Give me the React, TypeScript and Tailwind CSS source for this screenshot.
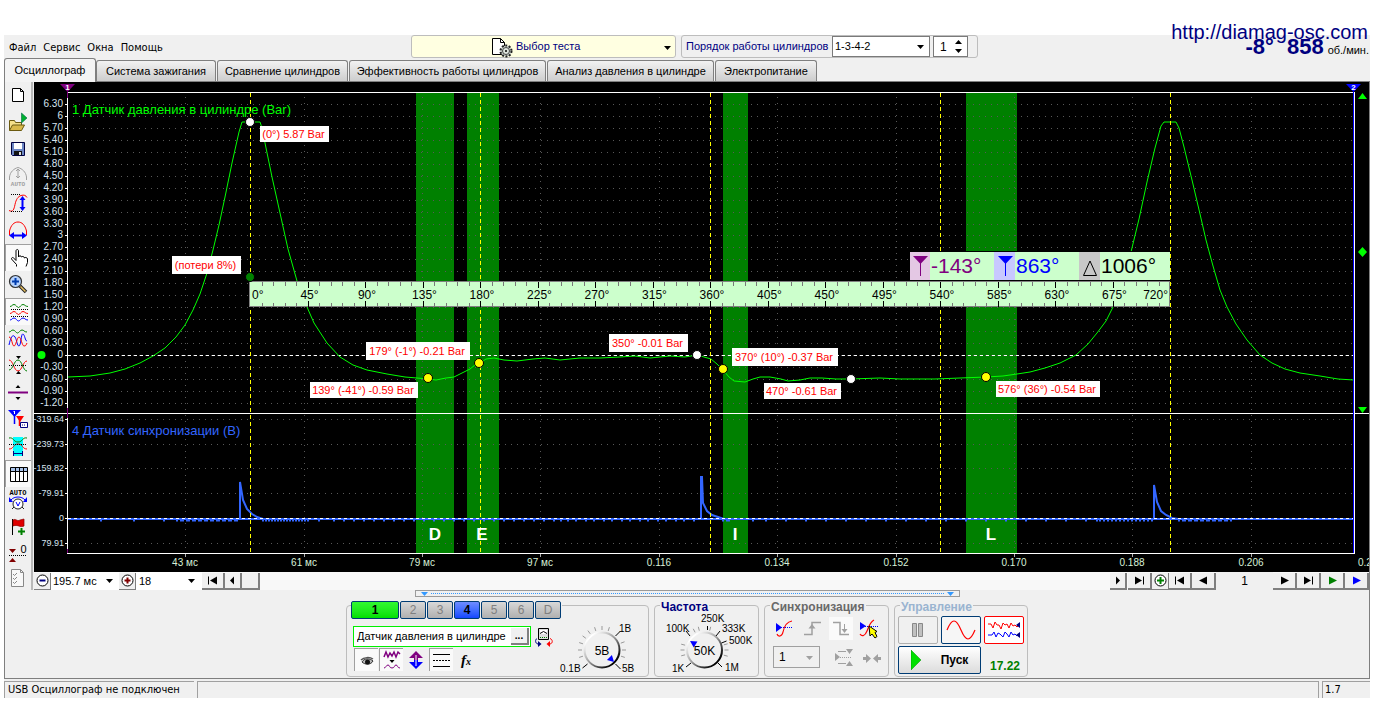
import React, { ReactNode } from 'react';

const UI = "font-['Liberation_Sans',sans-serif]";
const TAHOMA = "font-['DejaVu_Sans_Condensed','Noto_Sans',sans-serif]";

/* ---------- small helpers ---------- */

function Icon({ children, size = 20, label }: { children: ReactNode; size?: number; label?: string }) {
  return (
    <svg
      width={size}
      height={size}
      viewBox={`0 0 ${size} ${size}`}
      fill="none"
      strokeWidth="1"
      aria-hidden={label ? undefined : true}
      aria-label={label}
      className="shrink-0"
    >
      {children}
    </svg>
  );
}

function Caret({ className = '' }: { className?: string }) {
  return (
    <svg width="7" height="4" viewBox="0 0 7 4" aria-hidden="true" className={className}>
      <path d="M0 0h7L3.5 4z" fill="currentColor" />
    </svg>
  );
}

/* ---------- header ---------- */

const menus = ['Файл', 'Сервис', 'Окна', 'Помощь'];

function Header() {
  return (
    <header className="flex h-[25px] items-start bg-[#f0f0f0]">
      <nav className={`flex w-[407px] gap-[7px] pl-[5px] pt-[5px] text-[11px] leading-4 ${TAHOMA}`}>
        {menus.map((m) => (
          <button key={m} type="button">
            {m}
          </button>
        ))}
      </nav>
      <button
        type="button"
        className="relative flex h-[23px] w-[265px] items-center rounded-[3px] border border-[#bdbdbd] bg-[#ffffe1] pl-[79px] text-[11px] text-[#000080]"
      >
        <Icon size={22}>
          <path d="M1.5 2.5h8l4 4v12h-12z" fill="#fff" stroke="#000" />
          <path d="M9.5 2.5v4h4" stroke="#000" />
          <circle cx="15" cy="15" r="5.5" stroke="#222" strokeWidth="2" strokeDasharray="2 1.5" fill="#ccd4cc" />
          <circle cx="15" cy="15" r="3.5" stroke="#444" fill="#dfe6df" />
          <circle cx="15" cy="15" r="1" fill="#000" />
        </Icon>
        <span className="ml-[3px]">Выбор теста</span>
        <Caret className="absolute right-1 top-[10px] text-black" />
      </button>
      <div className="ml-[5px] flex h-[23px] w-[297px] items-center rounded-[3px] border border-[#bdbdbd] text-[12px]">
        <label htmlFor="order" className="w-[150px] whitespace-nowrap pl-1 text-[11px] text-[#000080]">
          Порядок работы цилиндров
        </label>
        <div className="relative">
          <select
            id="order"
            defaultValue="1-3-4-2"
            className="block h-[21px] w-[98px] appearance-none border border-[#7a7a7a] bg-white pl-[2px] text-[11px] text-black"
          >
            <option>1-3-4-2</option>
            <option>1-2-4-3</option>
          </select>
          <Caret className="pointer-events-none absolute right-[6px] top-[9px]" />
        </div>
        <div className="relative ml-[3px]">
          <input
            aria-label="Номер цилиндра"
            defaultValue="1"
            className="block h-[21px] w-[35px] border border-[#7a7a7a] bg-white pl-[6px] text-[12px] text-black"
          />
          <svg width="7" height="13" viewBox="0 0 7 13" className="absolute right-[6px] top-[4px]" aria-hidden="true">
            <path d="M0 4h7L3.5 0zM0 9h7L3.5 13z" fill="#000" />
          </svg>
        </div>
      </div>
      <div className="ml-auto flex items-baseline pr-px text-[#000080]">
        <span className="text-[22px] font-bold leading-6">-8°</span>
        <span className="ml-[13px] text-[22px] font-bold leading-6">858</span>
        <span className="ml-1 text-[11px] text-black">об./мин.</span>
      </div>
    </header>
  );
}

function Tabs() {
  const rest = 'h-[21px] rounded-t-[3px] border border-b-0 border-[#7f7f7f] bg-gradient-to-b from-[#f2f2f2] to-[#cdcdcd] ';
  return (
    <div role="tablist" className="flex h-[22px] items-end gap-px whitespace-nowrap border-b border-[#7f7f7f] text-[11px] text-black">
      <button
        role="tab"
        aria-selected="true"
        className="-mb-px -mr-px h-[24px] w-[92px] rounded-t-[3px] border border-b-0 border-[#7f7f7f] bg-[#f4f4f4]"
      >
        Осциллограф
      </button>
      <button role="tab" className={`${rest} w-[120px]`}>Система зажигания</button>
      <button role="tab" className={`${rest} w-[131px]`}>Сравнение цилиндров</button>
      <button role="tab" className={`${rest} w-[197px]`}>Эффективность работы цилиндров</button>
      <button role="tab" className={`${rest} w-[167px]`}>Анализ давления в цилиндре</button>
      <button role="tab" className={`${rest} w-[102px]`}>Электропитание</button>
    </div>
  );
}

/* ---------- left toolbar ---------- */

const tools: { label: string; pressed?: boolean; icon: ReactNode }[] = [
  {
    label: 'Новый',
    icon: <path d="M4.500 3.500h8l3 3v10h-11zM12.500 3.500v3h3" fill="#fff" stroke="#000" />,
  },
  {
    label: 'Открыть',
    icon: (
      <>
        <path d="M1.500 18.500v-10h5l1 2h6v3" fill="#f5e08a" stroke="#6b5a10" />
        <path d="M1.500 18.500l3-5.500h12l-3 5.500z" fill="#d8b84a" stroke="#6b5a10" />
        <path d="M13.500 1v10l5.500-5z" fill="#00b030" stroke="#064" strokeWidth=".6" />
      </>
    ),
  },
  {
    label: 'Сохранить',
    icon: (
      <>
        <path d="M3.500 3.500h13v13h-12l-1-1z" fill="#6c86c4" stroke="#000040" />
        <path d="M6 4h8v6H6z" fill="#fff" />
        <path d="M6 12h8v4H6z" fill="#111" />
        <path d="M11 13h2v3h-2z" fill="#ddd" />
      </>
    ),
  },
  {
    label: 'Авто амплитуда',
    icon: (
      <>
        <path d="M1.500 14v-3C2 6 6 2.500 10 1.500c4 1 8 4.500 8.500 9.500v3" stroke="#a0a0a0" />
        <path d="M10 3v9M8 5l2-2 2 2M8 10l2 2 2-2" stroke="#a0a0a0" />
        <text x="10" y="19.500" textAnchor="middle" fontSize="6" fontWeight="bold" fill="#a0a0a0" fontFamily="Liberation Mono">AUTO</text>
      </>
    ),
  },
  {
    label: 'Высота сигнала',
    icon: (
      <>
        <path d="M1 17.500c4 2 5-1 6-6s3-8 6-9c3-1 5 0 6 2" stroke="#f00" />
        <path d="M3 1.500h10M3 18.500h11" stroke="#000" strokeDasharray="1 1" />
        <path d="M14.500 5v11" stroke="#00f" strokeWidth="2" />
        <path d="M11.500 7l3-4 3 4zM11.500 14l3 4 3-4z" fill="#00f" />
      </>
    ),
  },
  {
    label: 'Ширина сигнала',
    icon: (
      <>
        <path d="M1.500 15v-4C3 5 6 2 10 2s7 3 8.500 9v4" stroke="#f00" />
        <path d="M4 15.500h12" stroke="#00f" strokeWidth="2" />
        <path d="M6 12l-5 3.500L6 19zM14 12l5 3.500-5 3.500z" fill="#00f" />
      </>
    ),
  },
  {
    label: 'Рука',
    pressed: true,
    icon: (
      <path
        d="M7.500 18.500v-2l-5-5.500c0-2 2-2 3 0l1.500 1.500V3c0-2 2.500-2 2.500 0v6c0-1.500 3-1.500 3 0 .5-1 3-.5 3 1 .5-1 3-.5 3 1v3.500l-1.500 4"
        fill="#fff"
        stroke="#000"
      />
    ),
  },
  {
    label: 'Лупа',
    icon: (
      <>
        <path d="M12 12l6 6" stroke="#222" strokeWidth="3.500" />
        <path d="M12.500 12.500l5 5" stroke="#e8c060" strokeWidth="1.500" />
        <circle cx="7.500" cy="7.500" r="6" fill="#b5d2ff" stroke="#333" strokeWidth="1.200" />
        <path d="M4 7.500h7M7.500 4v7" stroke="#003cae" strokeWidth="2" />
      </>
    ),
  },
  {
    label: 'Сигналы раздельно',
    pressed: true,
    icon: (
      <>
        <path d="M1 4.500c2 0 2-2 4-2s3 3 4.500 3 2.500-3 4.500-3 2 2 5 2" stroke="#008000" />
        <path d="M1 11.500c2 0 2-2 4-2s3 3 4.500 3 2.500-3 4.500-3 2 2 5 2" stroke="#f00" />
        <path d="M1 18c2 0 2-2 4-2s3 3 4.500 3 2.500-3 4.500-3 2 2 5 2" stroke="#00f" />
        <path d="M2 7.500h17M2 14.500h17" stroke="#000" strokeDasharray="1 1" />
      </>
    ),
  },
  {
    label: 'Сигналы вместе',
    icon: (
      <>
        <path d="M1 4c2 0 2-2 4-2s3 3 4.500 3 2.500-3 4.500-3 2 2 5 2" stroke="#008000" />
        <path d="M1 17c2-9 4-11 6-8s2 9 4 9 2-13 4-12 2 7 4 7" stroke="#00f" />
        <path d="M1 9c3 0 3 9 5 9s3-9 5-9 3 9 5 9 2-1 3-3" stroke="#f00" />
      </>
    ),
  },
  {
    label: 'Наложение',
    icon: (
      <>
        <path d="M1 5c4 0 5 11 9 11s5-10 9-10" stroke="#f00" />
        <path d="M1 15c4 0 5-10 9-10s5 11 9 11" stroke="#008000" />
        <path d="M1 10.500h18" stroke="#000" strokeDasharray="1 1" />
        <path d="M8 1h5l-2.500 3zM8 19h5l-2.500-3z" fill="#000" />
      </>
    ),
  },
  {
    label: 'Граница',
    icon: (
      <>
        <path d="M0 10.500h20" stroke="#800080" strokeWidth="2" />
        <path d="M7.500 6h5L10 3zM7.500 15h5L10 18z" fill="#000" />
      </>
    ),
  },
  {
    label: 'Маркеры',
    icon: (
      <>
        <path d="M0 1h13L6.500 8z" fill="#00f" />
        <path d="M6.500 5v10" stroke="#00f" strokeWidth="1.500" />
        <path d="M8 7h8l-4 6z" fill="#f00" />
        <path d="M11.500 9v8" stroke="#f00" strokeWidth="1.500" />
        <path d="M12.500 13.500h7v5h-7z" fill="#fff" stroke="#000080" />
        <path d="M14 16h4" stroke="#000080" strokeDasharray="1 1" />
        <path d="M6.500 2v3M5.500 2.500h1" stroke="#fff" />
      </>
    ),
  },
  {
    label: 'Область',
    icon: (
      <>
        <path d="M5 1h10v13l-1 2v4H6v-4l-1-2z" fill="#00ffff" />
        <path d="M1 2c5-1 4 4 9 4s4-5 9-4" stroke="#008000" />
        <path d="M1 13c5 0 4-5 9-5s4 5 9 5" stroke="#f00" />
        <path d="M1 8.500h18" stroke="#000" strokeDasharray="1 1" />
        <path d="M5.500 15v5M14.500 15v5M6 17.500h8" stroke="#000080" />
      </>
    ),
  },
  {
    label: 'Таблица',
    pressed: true,
    icon: (
      <>
        <path d="M1.500 3.500h17v14h-17z" fill="#fff" stroke="#000" />
        <path d="M2 4h16v3H2z" fill="#a9c3ea" />
        <path d="M1.500 7.500h17M6.500 3.500v14M10.500 3.500v14M14.500 3.500v14" stroke="#000" />
      </>
    ),
  },
  {
    label: 'Авто режим',
    icon: (
      <>
        <text x="10" y="5" textAnchor="middle" fontSize="7" fontWeight="bold" fill="#000" fontFamily="Liberation Mono">AUTO</text>
        <path d="M3 10c3-4 11-4 14 0" stroke="#00f" />
        <path d="M1 7v5h4zM19 7v5h-4z" fill="#00f" />
        <circle cx="10" cy="14" r="5" fill="#fff" stroke="#222" />
        <path d="M8 12l2 4 2-4" stroke="#00f" />
        <path d="M4 19l2-2M16 19l-2-2" stroke="#222" />
      </>
    ),
  },
  {
    label: 'Флаг',
    icon: (
      <>
        <path d="M4.500 2v16" stroke="#000" />
        <path d="M5 3c3-2 4 2 7 0l4-1v7c-4 2-6-2-11 0z" fill="#e00000" stroke="#800" strokeWidth=".7" />
        <path d="M13.500 11v7M10 14.500h7" stroke="#008000" strokeWidth="2" />
      </>
    ),
  },
  {
    label: 'Обнуление',
    icon: (
      <>
        <path d="M1 5h7l-3.500 4zM1 18h7l-3.500-4z" fill="#800000" />
        <path d="M1 11.500h18" stroke="#000" strokeDasharray="1 1" />
        <text x="12.500" y="9" fontSize="11" fill="#000" fontFamily="Liberation Sans">0</text>
      </>
    ),
  },
  {
    label: 'Отчёт',
    icon: (
      <>
        <path d="M3.500 1.500h9l3 3v14h-12z" fill="#f8f8f8" stroke="#888" />
        <path d="M12.500 1.500v3h3M5 6l1.500 1.500L9 5M5 10l1.500 1.500L9 9M5 14l1.500 1.500L9 13" stroke="#888" />
      </>
    ),
  },
];

function Toolbar() {
  return (
    <div role="toolbar" aria-label="Инструменты" className="flex w-[28px] shrink-0 flex-col border-r-2 border-[#b8b8b8] bg-[#f0f0f0]">
      {tools.map((t) => (
        <button
          key={t.label}
          type="button"
          aria-label={t.label}
          aria-pressed={!!t.pressed}
          className={
            t.pressed
              ? 'flex h-[27px] items-center justify-center border-l border-t border-[#a0a0a0] bg-[#fafafa]'
              : 'flex h-[27px] items-center justify-center pb-[2px] last:h-[22px]'
          }
        >
          <Icon>{t.icon}</Icon>
        </button>
      ))}
    </div>
  );
}

/* ---------- chart ---------- */

const rise: [number, number][] = [
  [68, 377], [90, 376], [110, 373], [125, 369], [140, 363], [153, 356], [165, 348], [176, 337], [185, 325], [193, 310],
  [200, 294], [207, 273], [213, 250], [219, 225], [225, 197], [232, 163], [239, 132], [242, 122],
];
const cycle: [number, number][] = [
  [260, 122], [262, 128], [265, 143], [272, 177], [280, 213], [288, 249], [297, 281], [307, 307], [314, 323], [327, 343],
  [340, 357], [353, 365], [367, 370], [387, 374], [405, 377], [417, 378], [428, 379], [436, 380], [446, 378], [454, 377],
  [462, 373], [470, 369], [475, 365], [480, 363], [486, 359], [494, 358], [504, 360], [517, 361], [533, 359], [545, 358],
  [560, 360], [580, 358], [600, 358], [620, 357], [635, 356], [650, 358], [670, 356], [685, 357], [697, 355], [704, 357],
  [711, 359], [717, 364], [723, 370], [729, 377], [734, 381], [745, 382], [753, 379], [760, 377], [770, 377], [781, 379],
  [788, 381], [800, 380], [810, 378], [822, 378], [836, 379], [851, 379], [880, 378], [900, 379], [935, 379], [960, 378],
  [986, 377], [1003, 376], [1017, 374], [1030, 372], [1045, 368], [1060, 363], [1076, 355], [1088, 344], [1097, 333],
  [1106, 321], [1113, 307], [1123, 281], [1131, 252], [1139, 219], [1147, 182], [1155, 148], [1161, 126], [1164, 122],
];
const tail: [number, number][] = [
  [1176, 122], [1179, 128], [1184, 147], [1192, 180], [1200, 214], [1206, 240], [1213, 266], [1220, 290], [1227, 307],
  [1236, 324], [1247, 340], [1260, 355], [1272, 363], [1285, 369], [1300, 373], [1320, 376], [1338, 379], [1354, 380],
];
const pressurePoints = [...rise, ...cycle, ...tail].map((p) => p.join(',')).join(' ');

const gridX = [185, 304, 422, 540, 659, 777, 896, 1014, 1132, 1251];
const timeLabels = ['43 мс', '61 мс', '79 мс', '97 мс', '0.116', '0.134', '0.152', '0.170', '0.188', '0.206'];

const yLabels = [
  '6.30', '6', '5.70', '5.40', '5.10', '4.80', '4.50', '4.20', '3.90', '3.60', '3.30', '3', '2.70', '2.40', '2.10', '1.80',
  '1.50', '1.20', '0.90', '0.60', '0.30', '0', '-0.30', '-0.60', '-0.90', '-1.20',
].map((text, i) => ({ text, y: Math.round(104 + (i * 251) / 21) }));

const syncLabels = [
  { text: '-319.64', y: 419 },
  { text: '-239.73', y: 444 },
  { text: '-159.82', y: 468 },
  { text: '-79.91', y: 493 },
  { text: '0', y: 518 },
  { text: '79.91', y: 543 },
];

const bands = [
  { x: 416, w: 38, name: 'D', tx: 435 },
  { x: 467, w: 32, name: 'E', tx: 482 },
  { x: 723, w: 25, name: 'I', tx: 735 },
  { x: 966, w: 51, name: 'L', tx: 991 },
];

const callouts = [
  { x: 260, y: 126, w: 69, h: 16, text: '(0°) 5.87 Bar' },
  { x: 172, y: 256, w: 69, h: 18, text: '(потери 8%)' },
  { x: 366, y: 342, w: 104, h: 18, text: '179° (-1°) -0.21 Bar' },
  { x: 310, y: 382, w: 108, h: 16, text: '139° (-41°) -0.59 Bar' },
  { x: 609, y: 334, w: 79, h: 18, text: '350° -0.01 Bar' },
  { x: 732, y: 348, w: 106, h: 18, text: '370° (10°) -0.37 Bar' },
  { x: 764, y: 383, w: 77, h: 16, text: '470° -0.61 Bar' },
  { x: 996, y: 381, w: 104, h: 16, text: '576° (36°) -0.54 Bar' },
];

const points = [
  { x: 250, y: 122, c: '#fff' },
  { x: 250, y: 277, c: '#008000' },
  { x: 428, y: 378, c: '#ff0' },
  { x: 479, y: 363, c: '#ff0' },
  { x: 697, y: 355, c: '#fff' },
  { x: 723, y: 369, c: '#ff0' },
  { x: 851, y: 379, c: '#fff' },
  { x: 986, y: 377, c: '#ff0' },
];

const noise = [
  { from: 100, to: 176, step: 17 },
  { from: 176, to: 238, step: 2 },
  { from: 262, to: 310, step: 2 },
  { from: 318, to: 560, step: 9 },
  { from: 560, to: 698, step: 5 },
  { from: 722, to: 732, step: 2 },
  { from: 752, to: 1090, step: 13 },
  { from: 1096, to: 1152, step: 3 },
  { from: 1178, to: 1232, step: 2 },
];
const noiseMarks = noise.flatMap(({ from, to, step }) => {
  const marks: number[] = [];
  for (let x = from; x < to; x += step + ((x * 7) % (step + 1))) marks.push(x);
  return marks;
});

function RulerTicks() {
  return (
    <>
      {Array.from({ length: 79 }, (_, i) => i + 1).map((i) => {
        const x = Math.round(250 + i * 11.5) + 0.5;
        const major = i % 5 === 0;
        const len = major ? 6 : 4;
        return <path key={i} d={`M${x} 282v${len}M${x} ${307 - len}v${len}`} stroke={major ? '#000' : '#777'} />;
      })}
      {Array.from({ length: 17 }, (_, i) => i).map((i) => (
        <text
          key={i}
          x={i === 0 ? 252 : i === 16 ? 1168 : 250 + i * 57.5 + 2}
          y="299"
          textAnchor={i === 0 ? 'start' : i === 16 ? 'end' : 'middle'}
          fontSize="12"
          fill="#000"
        >
          {i * 45}°
        </text>
      ))}
    </>
  );
}

function Chart() {
  return (
    <svg
      viewBox="34 82 1335 490"
      className={`block h-auto w-full bg-black ${UI}`}
      role="img"
      aria-label="Осциллограмма"
      fill="none"
      fontSize="10"
    >
      {bands.map((b) => (
        <rect key={b.name} x={b.x} y="93" width={b.w} height="460" fill="#008000" />
      ))}
      <g stroke="#585858">
        {[...yLabels, ...syncLabels].map((l, i) => (
          <path key={i} d={`M73 ${l.y + 0.5}H1354`} strokeDasharray="1 5" />
        ))}
        {gridX.map((x) => (
          <path key={x} d={`M${x + 0.5} 97V553`} strokeDasharray="1 5" />
        ))}
      </g>
      <g fill="#d8e4f0" textAnchor="end">
        {yLabels.map((l) => (
          <text key={l.text} x="63" y={l.y + 3}>
            {l.text}
          </text>
        ))}
        {syncLabels.map((l) => (
          <text key={l.text} x="64" y={l.y + 3} fontSize="9">
            {l.text}
          </text>
        ))}
      </g>
      <path d={[...yLabels, ...syncLabels].map((l) => `M65 ${l.y + 0.5}h2`).join('')} stroke="#fff" />

      <text x="72" y="114" fontSize="13" fill="#00ff00">1 Датчик давления в цилиндре (Bar)</text>
      <text x="72" y="435" fontSize="13" fill="#3366ff">4 Датчик синхронизации (В)</text>

      <path d="M68 355.500H1354" stroke="#fff" strokeDasharray="3 3" />
      <polyline points={pressurePoints} stroke="#00ff00" />

      <path d="M68 519H1354" stroke="#3366ff" strokeWidth="2" />
      <path d={noiseMarks.map((x) => `M${x} 520.500h2`).join('')} stroke="#3366ff" strokeWidth="2" />
      <g stroke="#3366ff" strokeWidth="2">
        <path d="M240 519v-37l3 18 4 9 5 5 5 3 6 2" />
        <path d="M701 519v-42h1l1 26 4 8 5 4 6 2 6 2" />
        <path d="M1154 519v-34l3 17 4 9 5 4 6 3 6 1" />
      </g>
      <path d="M68 518.500H1354" stroke="#fff" strokeDasharray="3 3" />

      <path d="M250.500 93V553M480.500 93V553M710.500 93V553M940.500 93V553M1170.500 93V553" stroke="#ff0" strokeDasharray="4 3" />

      <path d="M67 92.500H1354M67.500 92V553M34 413.500H1369M67 553.500H1355M1354.500 92V553" stroke="#fff" />
      <path d="M67.500 92v6M67.500 408v10M67.500 549v4" stroke="#800080" />
      <path d="M1353.500 92V553" stroke="#00f" />
      <path d="M60 84h15l-7.500 8z" fill="#800080" />
      <path d="M1346 84h15l-7.500 8z" fill="#00f" />
      <g fill="#fff" fontSize="8" fontWeight="bold" textAnchor="middle">
        <text x="67.500" y="90">1</text>
        <text x="1353.500" y="90">2</text>
      </g>

      {gridX.map((x, i) => (
        <g key={x}>
          <path d={`M${x + 0.5} 554v3`} stroke="#aaa" />
          <text x={x} y="566" textAnchor="middle" fill="#d8f0d8">{timeLabels[i]}</text>
        </g>
      ))}
      <text x="1358" y="566" fill="#d8f0d8">0.224</text>

      <circle cx="41.500" cy="355" r="4" fill="#00ff00" />
      <path d="M1358 99h9l-4.500-6zM1362.500 247l4.500 5-4.500 5-4.500-5zM1358 407h9l-4.500 6z" fill="#00ff00" />

      {bands.map((b) => (
        <text key={b.name} x={b.tx} y="540" textAnchor="middle" fontSize="17" fontWeight="bold" fill="#fff">
          {b.name}
        </text>
      ))}

      <rect x="249.500" y="281.500" width="920" height="25" fill="#ccffcc" stroke="#808080" />
      <RulerTicks />

      <rect x="910" y="251" width="260" height="30" fill="#000" />
      <rect x="910" y="252" width="260" height="28" fill="#ccffcc" />
      <rect x="910" y="252" width="20" height="28" fill="#e4c8e4" />
      <rect x="994" y="252" width="21" height="28" fill="#c8c8ff" />
      <rect x="1079" y="252" width="21" height="28" fill="#c8c8c8" />
      <path d="M913 256h15l-7.500 8zM920 262h1v14h-1z" fill="#800080" />
      <path d="M998 256h15l-7.500 8zM1005 262h1v14h-1z" fill="#00f" />
      <path d="M1083.500 275.500h13L1090 261z" stroke="#000" />
      <g fontSize="21">
        <text x="931" y="273" fill="#800080">-143°</text>
        <text x="1016" y="273" fill="#00f">863°</text>
        <text x="1101" y="273" fill="#000">1006°</text>
      </g>

      {callouts.map((c) => (
        <g key={c.text}>
          <rect x={c.x} y={c.y} width={c.w} height={c.h} fill="#fff" />
          <text x={c.x + c.w / 2 - 1} y={c.y + c.h / 2 + 4} textAnchor="middle" fontSize="11" fill="#f00">
            {c.text}
          </text>
        </g>
      ))}
      {points.map((p) => (
        <circle key={`${p.x}-${p.y}`} cx={p.x} cy={p.y} r="4.500" fill={p.c} stroke="#000" />
      ))}
    </svg>
  );
}

/* ---------- navigation bar under the chart ---------- */

function NavButton({ label, path, color = '#000', width }: { label: string; path: string; color?: string; width: string }) {
  return (
    <button
      type="button"
      aria-label={label}
      className={`flex h-[17px] shrink-0 items-center justify-center border-b-2 border-r-2 border-[#7f7f7f] bg-[#f0f0f0] ${width}`}
    >
      <svg width="11" height="9" viewBox="0 0 11 9" aria-hidden="true" fill={color}>
        <path d={path} />
      </svg>
    </button>
  );
}

const LEFT = 'M9 0.500v8L1 4.500z';
const RIGHT = 'M2 0.500v8L10 4.500z';
const SMALL_LEFT = 'M7 0.500v8L3 4.500z';
const SMALL_RIGHT = 'M4 0.500v8L8 4.500z';
const FIRST = 'M1 0.500h1v8H1zM10 0.500v8L3 4.500z';
const LAST = 'M9 0.500h1v8H9zM1 0.500v8L8 4.500z';

function RoundButton({ label, sign }: { label: string; sign: ReactNode }) {
  return (
    <button type="button" aria-label={label} className="flex h-[17px] w-[17px] shrink-0 items-center justify-center border-b border-r border-[#7f7f7f] bg-[#f0f0f0]">
      <svg width="13" height="13" viewBox="0 0 13 13" fill="none" aria-hidden="true">
        <circle cx="6.500" cy="6.500" r="5.500" stroke="#000" fill="#fff" />
        {sign}
      </svg>
    </button>
  );
}

function NavBar() {
  return (
    <div className="flex h-[18px] items-center bg-[#f8f8f8] text-[12px] text-black">
      <RoundButton label="Уменьшить" sign={<path d="M3.500 6.500h6" stroke="#000080" strokeWidth="2" />} />
      <div className="relative">
        <select aria-label="Развёртка" className="block h-[18px] w-[68px] appearance-none bg-white pl-[2px] text-[11px] leading-4">
          <option>195.7 мс</option>
        </select>
        <Caret className="pointer-events-none absolute right-[6px] top-[7px]" />
      </div>
      <RoundButton label="Увеличить" sign={<path d="M3.500 6.500h6M6.500 3.500v6" stroke="#800000" strokeWidth="2" />} />
      <div className="relative">
        <select aria-label="Кадры" className="block h-[18px] w-[66px] appearance-none bg-white pl-[3px] text-[11px] leading-4">
          <option>18</option>
        </select>
        <Caret className="pointer-events-none absolute right-[7px] top-[7px]" />
      </div>
      <NavButton label="В начало" path={FIRST} width="w-[23px]" />
      <NavButton label="Назад" path={SMALL_LEFT} width="w-[17px]" />
      <div className="flex grow bg-[#f8f8f8]">
        <div className="h-[17px] w-[18px] border-b-2 border-r-2 border-[#7f7f7f] bg-[#f0f0f0]" />
      </div>
      <NavButton label="Вперёд" path={SMALL_RIGHT} width="w-[17px]" />
      <div className="w-px" />
      <NavButton label="В конец" path={LAST} width="w-[24px]" />
      <RoundButton label="Добавить" sign={<path d="M3 6.500h7M6.500 3v7" stroke="#008000" strokeWidth="2" />} />
      <NavButton label="Первый кадр" path={FIRST} width="w-[23px]" />
      <NavButton label="Предыдущий кадр" path={LEFT} width="w-[24px]" />
      <output className="block h-[18px] w-[57px] bg-[#f0f0f0] text-center leading-[18px]">1</output>
      <NavButton label="Следующий кадр" path={RIGHT} width="w-[24px]" />
      <NavButton label="Последний кадр" path={LAST} width="w-[24px]" />
      <NavButton label="Воспроизвести" path={RIGHT} color="#008000" width="w-[24px]" />
      <NavButton label="Воспроизвести всё" path={RIGHT} color="#00f" width="w-[24px]" />
    </div>
  );
}

/* ---------- bottom control panel ---------- */

function Group({ title, color, width, children }: { title: string; color: string; width: string; children: ReactNode }) {
  return (
    <section className={`mt-[4px] h-[72px] shrink-0 rounded-[4px] border border-[#bdbdbd] ${width}`}>
      <h2 className={`-mt-[5px] ml-[5px] block w-fit bg-[#f0f0f0] px-px text-[12px] font-bold leading-3 ${color}`}>{title}</h2>
      {children}
    </section>
  );
}

function Knob({ cx, cy, value, pointer, ticks }: { cx: number; cy: number; value: string; pointer: number; ticks: number[] }) {
  const rad = (a: number) => (a * Math.PI) / 180;
  const px = cx + 13.5 * Math.cos(rad(pointer));
  const py = cy + 13.5 * Math.sin(rad(pointer));
  return (
    <>
      <defs>
        <linearGradient id={`rim-${Math.round(cx)}`} x1="0" y1="0" x2="1" y2="1">
          <stop offset="0.15" stopColor="#fff" />
          <stop offset="0.5" stopColor="#999" />
          <stop offset="0.85" stopColor="#000" />
        </linearGradient>
      </defs>
      {ticks.map((a) => (
        <line
          key={a}
          x1={cx + 20 * Math.cos(rad(a))}
          y1={cy + 20 * Math.sin(rad(a))}
          x2={cx + 24 * Math.cos(rad(a))}
          y2={cy + 24 * Math.sin(rad(a))}
          stroke="#999"
        />
      ))}
      <circle cx={cx} cy={cy} r="17.500" fill="#f0f0f0" stroke={`url(#rim-${Math.round(cx)})`} strokeWidth="2" />
      <path
        d="M3.500 0L-3 -3.500V3.500z"
        fill="#00f"
        transform={`translate(${px} ${py}) rotate(${pointer})`}
      />
      <text x={cx} y={cy + 5} textAnchor="middle" fontSize="12" fill="#000">{value}</text>
    </>
  );
}

const channelBase = 'h-[18px] rounded-[2px] border border-[#003c74] text-[12px] leading-3 ';
const off = 'w-[26px] bg-gradient-to-b from-[#d8d8d8] to-[#b0b0b0] text-[#808080]';
const pressedBtn = 'flex h-[23px] w-[24px] items-center justify-center border-l border-t border-[#a0a0a0] bg-[#fafafa]';
const flatBtn = 'flex h-[23px] w-[24px] items-center justify-center';

function ChannelGroup() {
  return (
    <section aria-label="Канал" className="mt-[4px] flex h-[72px] w-[303px] shrink-0 rounded-[4px] border border-[#bdbdbd]">
      <div className="-mt-[5px] ml-[4px] w-[211px] shrink-0">
        <div className="flex gap-px bg-[#f0f0f0]">
          <button type="button" className={`${channelBase} w-[48px] bg-gradient-to-b from-[#30f830] to-[#00e000] font-bold text-black`}>1</button>
          <button type="button" className={`${channelBase} ${off}`}>2</button>
          <button type="button" className={`${channelBase} ${off}`}>3</button>
          <button type="button" className={`${channelBase} w-[26px] bg-gradient-to-b from-[#6e8cff] to-[#1446ff] font-bold text-black`}>4</button>
          <button type="button" className={`${channelBase} ${off}`}>5</button>
          <button type="button" className={`${channelBase} ${off}`}>6</button>
          <button type="button" className={`${channelBase} ${off}`}>D</button>
        </div>
        <div className="ml-[2px] mt-[7px] flex items-center gap-[3px]">
          <div className="flex h-[21px] w-[178px] items-center border border-[#00f000] bg-white">
            <input
              aria-label="Датчик канала 1"
              defaultValue="Датчик давления в цилиндре"
              className="min-w-0 grow bg-white pl-[3px] text-[11px] text-black"
            />
            <button type="button" className="mr-px h-[17px] w-[18px] shrink-0 border-b-2 border-r-2 border-[#808080] bg-[#f0f0f0] text-[10px] font-bold leading-[8px]">
              ...
            </button>
          </div>
          <button type="button" aria-label="Параметры датчика">
            <Icon>
              <path d="M4.500 1.500h10v11h-10z" fill="#ddd" stroke="#000" />
              <path d="M6 3h7v4H6z" fill="#fff" />
              <path d="M6 6.500l3.500-2 3.500 2" stroke="#000" />
              <path d="M6 10.500h8" stroke="#008000" strokeDasharray="1 1" />
              <path d="M3 11.500c-2 1-2 5 1 5.500" stroke="#000080" />
              <path d="M4 14l3.500 3-3.500 3z" fill="#000080" />
              <path d="M16 11.500c3 1 3 5 0 5.500" stroke="#f00" />
              <path d="M16 14l-3.500 3 3.500 3z" fill="#f00" />
            </Icon>
          </button>
        </div>
        <div className="ml-[3px] mt-px flex gap-px">
          <button type="button" aria-label="Показать канал" className={pressedBtn}>
            <Icon>
              <path d="M5 12c2-4 8-4 11-1-2 4-8 4-11 1z" fill="#b8b8b8" stroke="#333" />
              <circle cx="10.500" cy="12" r="2.500" fill="#111" />
              <path d="M4 10c3-3 9-3 12-1" stroke="#555" strokeWidth="1.500" />
            </Icon>
          </button>
          <button type="button" aria-label="Фильтр" className={pressedBtn}>
            <Icon>
              <path d="M2 7l2-5 2 5 2-4 2 3 2-4 2 5 2-5 2 2" stroke="#800080" strokeWidth="1.500" />
              <path d="M7.500 10h5L10 13z" fill="#000" />
              <path d="M2 18c2 0 2-3 4-3s1 3 4 3 2-3 4-3 1 3 4 3" stroke="#800080" />
            </Icon>
          </button>
          <button type="button" aria-label="Инверсия" className={flatBtn}>
            <Icon>
              <path d="M10 1L3 8h5v2h4V8h5z" fill="#800080" />
              <path d="M10 19l-7-7h5v-2h4v2h5z" fill="#00f" />
              <path d="M10 5v11" stroke="#fff" />
            </Icon>
          </button>
          <button type="button" aria-label="Линии" className={pressedBtn}>
            <Icon>
              <path d="M1 4.500h17M1 16.500h17" stroke="#000" />
              <path d="M1 10.500h17" stroke="#000" strokeDasharray="2 1" />
            </Icon>
          </button>
          <button type="button" className={`${flatBtn} font-['Liberation_Serif',serif] text-[15px] font-bold italic leading-4 text-black`}>
            f<sub className="text-[10px]">x</sub>
          </button>
        </div>
      </div>
      <svg width="84" height="58" viewBox="556 619 84 58" className="ml-[-5px] mt-[13px] shrink-0" aria-hidden="true" fontSize="10">
        <Knob cx={601} cy={650} value="5В" pointer={45} ticks={[180, 198, 216, 234, 252, 270, 288, 0, 18, 340, 162]} />
        <path d="M614.500 636l5-5M614.500 664l5 5M586.500 664l-5 4" stroke="#000" />
        <text x="618" y="632" fill="#000">1В</text>
        <text x="621" y="672" fill="#000">5В</text>
        <text x="559" y="672" fill="#000">0.1В</text>
      </svg>
    </section>
  );
}

function FrequencyGroup() {
  return (
    <Group title="Частота" color="text-[#000080]" width="w-[105px]">
      <svg width="100" height="62" viewBox="656 613 100 62" className="ml-px block" aria-hidden="true" fontSize="10" fill="#000">
        <Knob cx={704.5} cy={650} value="50K" pointer={212} ticks={[166, 180, 194, 242, 255, 285, 345, 0, 15]} />
        <path d="M707.500 630v-4M716 636l4-5M721.500 643l5-2M718 663l4 4M691 663l-5 4M690 636l-4-5" stroke="#000" />
        <text x="701" y="622">250K</text>
        <text x="666" y="632">100K</text>
        <text x="722" y="632">333K</text>
        <text x="729" y="644">500K</text>
        <text x="672" y="672">1K</text>
        <text x="725" y="671">1M</text>
      </svg>
    </Group>
  );
}

function SyncGroup() {
  return (
    <Group title="Синхронизация" color="text-[#696969]" width="w-[125px]">
      <div className="ml-[8px] mt-[4px] flex gap-[4px]">
        <button type="button" aria-label="Уровень" className={flatBtn}>
          <Icon>
            <path d="M1 4v9l6-4.500z" fill="#00f" />
            <path d="M6 8.500h12" stroke="#00f" strokeDasharray="1 1" />
            <path d="M2 15c1 3 5 3 6-2s3-10 9-11" stroke="#f00" strokeWidth="1.200" />
          </Icon>
        </button>
        <button type="button" aria-label="По фронту" className={flatBtn}>
          <Icon>
            <path d="M1 15.500h8v-12h9" stroke="#a0a0a0" strokeWidth="1.500" />
            <path d="M5.500 9.500L9 5l3.500 4.500z" fill="#a0a0a0" />
          </Icon>
        </button>
        <button type="button" aria-label="По спаду" className={`${flatBtn} bg-[#fafafa]`}>
          <Icon>
            <path d="M2 3.500h7v12h9" stroke="#a0a0a0" strokeWidth="1.500" />
            <path d="M13.500 5v8" stroke="#a0a0a0" />
            <path d="M10.500 10h6l-3 4z" fill="#a0a0a0" />
          </Icon>
        </button>
        <button type="button" aria-label="Указать уровень" className={flatBtn}>
          <Icon>
            <path d="M1 3v8l6-4z" fill="#00f" />
            <path d="M6 7.500h13" stroke="#00f" strokeDasharray="1 1" />
            <path d="M1 15c2 3 5 2 7-3s3-9 7-11" stroke="#f00" strokeWidth="1.200" />
            <path d="M10 7l1 10 2-2 3 4 2-1.500-2-4 2-1z" fill="#ff0" stroke="#000" />
          </Icon>
        </button>
      </div>
      <div className="ml-[8px] mt-[6px] flex">
        <div className="relative mr-[12px]">
          <select aria-label="Канал синхронизации" disabled className="block h-[22px] w-[47px] appearance-none border border-[#a0a0a0] bg-[#f0f0f0] pl-[5px] text-[12px] text-black opacity-100">
            <option>1</option>
          </select>
          <Caret className="pointer-events-none absolute right-[7px] top-[10px] text-[#a0a0a0]" />
        </div>
        <button type="button" aria-label="Гистерезис" className={flatBtn}>
          <Icon>
            <path d="M1 5v8l5-4z" fill="#a0a0a0" />
            <path d="M4 3.500h8M4 15.500h8" stroke="#a0a0a0" />
            <path d="M6 9.500h12" stroke="#a0a0a0" strokeDasharray="1 1" />
            <path d="M12 1h7l-3.500 5zM12 18h7l-3.500-5z" fill="#a0a0a0" />
          </Icon>
        </button>
        <button type="button" aria-label="К центру" className="ml-[4px] flex h-[23px] w-[24px] items-center justify-center">
          <Icon>
            <path d="M1 9h3V6l5 4.500L4 15v-3H1zM19 9h-3V6l-5 4.500 5 4.500v-3h3z" fill="#a0a0a0" />
          </Icon>
        </button>
      </div>
    </Group>
  );
}

function ControlGroup() {
  const btn = 'flex items-center justify-center rounded-[2px] border ';
  return (
    <Group title="Управление" color="text-[#9ab4d0]" width="w-[134px]">
      <div className="ml-[3px] mt-[3px] flex gap-[3px]">
        <button type="button" aria-label="Пауза" className={`${btn} h-[28px] w-[40px] border-[#b0b0b0] bg-[#f0f0f0]`}>
          <Icon size={14}>
            <path d="M1.500 0.500h4v13h-4zM7.500 0.500h4v13h-4z" fill="#c0c0c0" stroke="#888" />
          </Icon>
        </button>
        <button type="button" aria-label="Синусоида" className={`${btn} h-[28px] w-[40px] border-[#003c74] bg-[#f6f6f6]`}>
          <svg width="30" height="20" viewBox="0 0 30 20" fill="none" aria-hidden="true">
            <path d="M1 10C6-2 10-2 15 10s9 12 14 0" stroke="#f00" strokeWidth="1.200" />
          </svg>
        </button>
        <button type="button" aria-label="Осциллограф" className={`${btn} h-[28px] w-[40px] border-[#ff0000] bg-white`}>
          <svg width="34" height="20" viewBox="0 0 34 20" fill="none" aria-hidden="true">
            <path d="M1 4h3l2 4 2-6 2 3h2l2 4 2-6 2 2 2-1 2 4 2-5 2 3 2-1 2 2 2-2" stroke="#f00" />
            <path d="M1 15h4l2-3 2 5 2-4 2 1 3 3 2-5 2 2 2 3 2-5 2 3 2-1 2 2" stroke="#00f" />
            <path d="M33 2v6l-4-3zM33 12v6l-4-3z" fill="#000080" />
          </svg>
        </button>
      </div>
      <div className="ml-[3px] mt-[2px] flex items-center">
        <button type="button" className={`${btn} h-[28px] w-[83px] gap-[20px] border-[#003c74] bg-gradient-to-b from-white to-[#dcdcdc] text-[12px] font-bold text-black`}>
          <svg width="10" height="20" viewBox="0 0 10 20" aria-hidden="true">
            <path d="M0 0v20L10 10z" fill="#00e000" stroke="#080" strokeWidth=".5" />
          </svg>
          Пуск
        </button>
        <span className="ml-[9px] mt-[12px] text-[12px] font-bold leading-3 text-[#008000]">17.22</span>
      </div>
    </Group>
  );
}

/* ---------- page ---------- */

export default function App() {
  return (
    <div className={`min-h-screen bg-white pl-1 pr-3 pt-[35px] text-black ${UI}`}>
      <a href="http://diamag-osc.com" className="absolute right-[14px] top-[20px] text-[20px] leading-6 text-[#000080]">
        http://diamag-osc.com
      </a>
      <div className="bg-[#f0f0f0]">
        <Header />
        <Tabs />
        <main className="border-b border-l border-r border-[#7f7f7f]">
          <div className="flex">
            <Toolbar />
            <div className="min-w-0 grow pl-px">
              <Chart />
              <NavBar />
            </div>
          </div>
          <div className="mx-auto flex h-[7px] w-[545px] items-center justify-between border border-[#9a9a9a] px-[5px]">
            <Caret className="text-[#3399ff]" />
            <div className="mx-[3px] grow border-t border-dotted border-[#3399ff]" />
            <Caret className="text-[#3399ff]" />
          </div>
          <div className="flex justify-center gap-[5px] pb-[1px] pt-[4px]">
            <ChannelGroup />
            <FrequencyGroup />
            <SyncGroup />
            <ControlGroup />
          </div>
        </main>
        <footer className={`mt-[2px] flex h-[17px] gap-[3px] text-[11px] leading-[15px] ${TAHOMA}`}>
          <div className="w-[190px] border-l border-t border-[#a0a0a0] pl-[3px]">USB Осциллограф не подключен</div>
          <div className="grow border-l border-r border-t border-[#a0a0a0]" />
          <div className="w-[48px] border-l border-t border-[#a0a0a0] pl-[2px]">1.7</div>
        </footer>
      </div>
    </div>
  );
}
